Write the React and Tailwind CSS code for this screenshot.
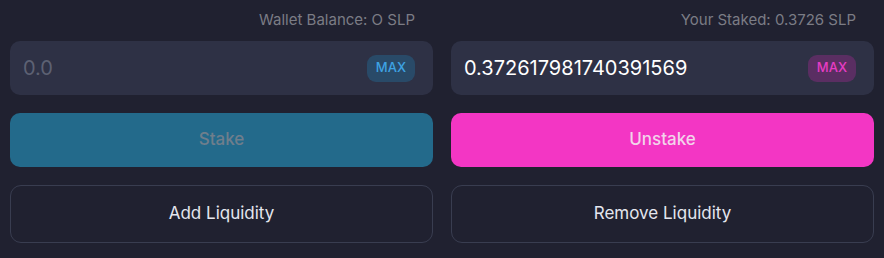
import { useState } from "react";

const AmountField = ({ value, onChange, placeholder, variant }) => {
  const badge =
    variant === "pink"
      ? "bg-[#5a2e62] text-[#e63cc4]"
      : "bg-[#294a68] text-[#3ea2e2]";

  return (
    <div className="h-[54px] rounded-[10px] bg-[#2e3145] flex items-center pl-[13px] pr-[18px]">
      <input
        value={value}
        onChange={(e) => onChange(e.target.value)}
        placeholder={placeholder}
        className="flex-1 min-w-0 bg-transparent outline-none text-[20px] text-white placeholder:text-[#5d6173]"
      />
      <button className={`h-[27px] px-[9px] rounded-[9px] text-[13px] font-medium ${badge}`}>
        MAX
      </button>
    </div>
  );
};

const Column = ({ label, field, action, liquidity }) => (
  <div className="flex-1 flex flex-col">
    <div className="h-[41px] flex items-center justify-end pr-[18px] text-[15px] text-[#7b7c85]">
      {label}
    </div>
    {field}
    <div className="mt-[18px]">{action}</div>
    <button className="mt-[18px] h-[58px] w-full rounded-[11px] border border-[#393d50] text-[17px] text-[#e4e6ee]">
      {liquidity}
    </button>
  </div>
);

export default function App() {
  const [stakeAmount, setStakeAmount] = useState("");
  const [unstakeAmount, setUnstakeAmount] = useState("0.372617981740391569");

  return (
    <div
      className="w-[884px] h-[258px] bg-[#202130] px-[10px] flex gap-[18px]"
      style={{ fontFamily: "Inter, 'Noto Sans', sans-serif" }}
    >
      <Column
        label="Wallet Balance: O SLP"
        field={
          <AmountField
            value={stakeAmount}
            onChange={setStakeAmount}
            placeholder="0.0"
            variant="blue"
          />
        }
        action={
          <button className="h-[54px] w-full rounded-[10px] bg-[#236a8b] text-[17px] font-medium text-[#6f7e8c]">
            Stake
          </button>
        }
        liquidity="Add Liquidity"
      />
      <Column
        label="Your Staked: 0.3726 SLP"
        field={
          <AmountField
            value={unstakeAmount}
            onChange={setUnstakeAmount}
            placeholder="0.0"
            variant="pink"
          />
        }
        action={
          <button className="h-[54px] w-full rounded-[10px] bg-[#f336c4] text-[17px] font-medium text-[#f2d4ea]">
            Unstake
          </button>
        }
        liquidity="Remove Liquidity"
      />
    </div>
  );
}
